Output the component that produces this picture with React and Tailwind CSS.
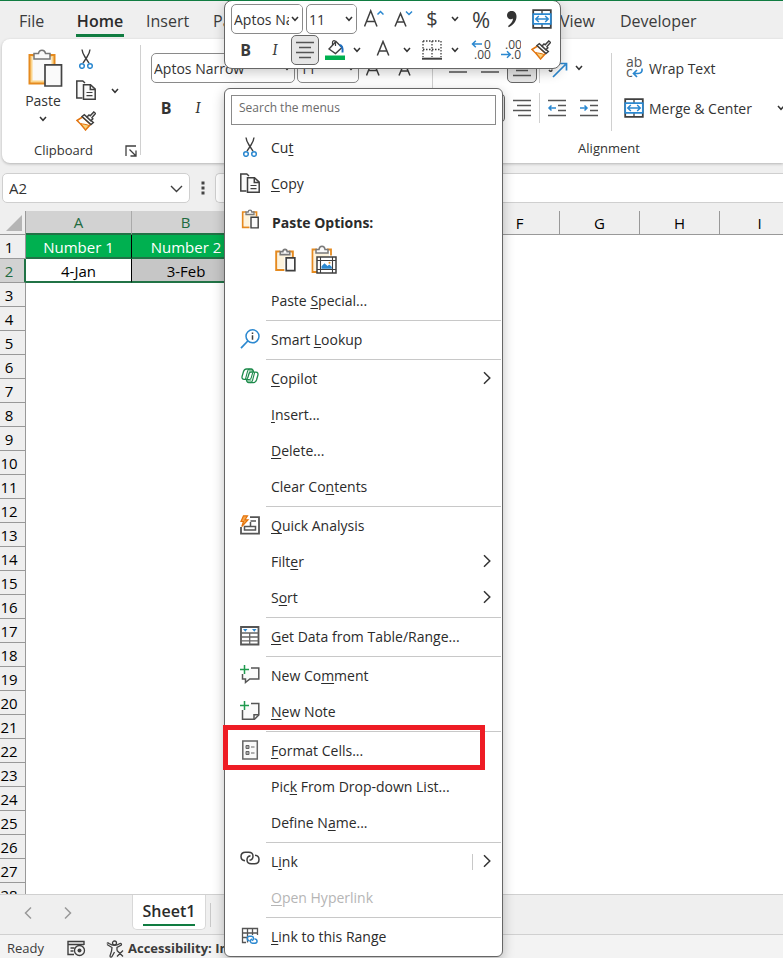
import React from "react";

const INK = "#3f3f3f";
const BLUE = "#2b88d0";

function Svg({ w = 20, h = w, box, className = "", children }) {
  return (
    <svg width={w} height={h} viewBox={box || `0 0 ${w} ${h}`} fill="none" stroke={INK} strokeWidth="1.5" className={`shrink-0 ${className}`} aria-hidden="true">
      {children}
    </svg>
  );
}

const Chevron = () => (
  <Svg w={8} h={6}><path d="M1 1l3 3.3L7 1" stroke="#333" strokeWidth="1.5" /></Svg>
);
const ArrowRight = () => (
  <Svg w={8} h={14}><path d="M1 1.2L6.8 7 1 12.8" stroke="#333" /></Svg>
);

const Scissors = () => (
  <Svg>
    <path d="M6 .5c.3 3 1.300 5 3 7.500l4 6.200M14 .5c-.3 3-1.300 5-3 7.500l-4 6.200" strokeWidth="1.400" />
    <circle cx="6" cy="17" r="2.300" stroke={BLUE} />
    <circle cx="14" cy="17" r="2.300" stroke={BLUE} />
  </Svg>
);
const Copy = () => (
  <Svg>
    <path d="M6.500 18H.8V1h6l2.200 2" fill="#fafafa" />
    <path d="M7.500 4.800h7l4.700 4.400v10H7.500z" fill="#fafafa" />
    <path d="M14.300 5v4.500h4.700" />
    <path d="M10.500 12.500h6M10.500 15.700h6" strokeWidth="1.200" />
  </Svg>
);
const Brush = () => (
  <Svg>
    <path d="M1 9.500l5.500-3.500 8 7.500-5 5.500C7.500 16.500 4 12 1 9.500z" fill="#fff" stroke="#e3740e" />
    <path d="M4.500 12.500c3 .8 6 .8 8.500 2l-3.500 4c-1.500-2-3-4-5-6z" fill="#f9d27c" stroke="#e3740e" strokeWidth="1" />
    <path d="M6 5.500l2.300-1.800 9 7.800-2.300 2z" fill="#fff" />
    <path d="M11 6l2-2 1.200.8 3.600-3.800 1.700 1.500-3.500 4 .8 1.300-2 2z" fill="#fff" />
  </Svg>
);
const Clip = ({ w = 20, h = 20 }) => (
  <Svg w={w} h={h} box="0 0 20 20">
    <path d="M6 3H2.700v15.300H9.500M13 3h3.500v4.500" stroke="#e58a1f" strokeWidth="1.700" />
    <path d="M4 4.500v12.500h5.500V7.500h5.700v-3z" fill="#fdf3dc" stroke="none" />
    <path d="M6 5.500V3h2.200c.2-2.500 3.400-2.500 3.600 0H14v2.500z" fill="#fafafa" stroke="#7a7a7a" strokeWidth="1.300" />
    <path d="M11 8.200h7.200v10.700H11z" fill="#fafafa" strokeWidth="1.400" />
  </Svg>
);
const BigPaste = () => (
  <Svg w={35} h={38}>
    <path d="M1.500 6h25v28.500h-25z" fill="#fbd58c" stroke="#e58a1f" strokeWidth="2" />
    <path d="M4.500 8h19v23.500h-19z" fill="#fafafa" stroke="none" />
    <path d="M6 10V4.500h4.500c.6-4.500 6.400-4.500 7 0H22V10z" fill="#fafafa" stroke="#777" />
    <path d="M17 15.800h16.500V37H17z" fill="#fafafa" stroke="#444" strokeWidth="1.700" />
  </Svg>
);
const PastePicture = () => (
  <Svg w={26} h={29}>
    <path d="M6 4.500H1.500v22.500H6M16 4.500h4v6" stroke="#e58a1f" strokeWidth="1.800" />
    <path d="M3 6v19.500h3V12h12V6z" fill="#fdf3dc" stroke="none" />
    <path d="M5 8V4.500h3c.4-4.500 5.600-4.500 6 0h3V8z" fill="#fafafa" stroke="#7a7a7a" />
    <path d="M6 12h19v16H6z" fill="#fff" />
    <path d="M9.500 12v16M21.500 12v16M6 15.500h19M6 24.500h19" strokeWidth="1.100" />
    <path d="M10.500 23.800v-2.500l3-3 3 2.700 1.800-1.500 2.500 2.500v1.800z" fill="#2b88d0" stroke="none" />
    <circle cx="18.500" cy="17.800" r="1" fill="#e58a1f" stroke="none" />
  </Svg>
);
const Lookup = () => (
  <Svg>
    <circle cx="12.500" cy="7.300" r="6.500" stroke={BLUE} />
    <path d="M7.800 12L1 19.200" stroke={BLUE} strokeWidth="1.700" />
    <path d="M12.500 6.300v4.500M12.500 3.500v1.500" />
  </Svg>
);
const Copilot = () => (
  <Svg w={18} h={16}>
    <path d="M8 1h2.500c1.200 0 1.600.8 2 3H9.500c-1 0-1.700.6-2 1.700zM10 15H7.500c-1.200 0-1.600-.8-2-3h3c1 0 1.700-.6 2-1.700z" fill="#8cc8a3" stroke="none" />
    <g stroke="#1d8a4b" strokeWidth="1.300">
      <path d="M12.600 4.200c-.4-2-.7-3.200-2.300-3.200H5.500C3.800 1 3 2 2.500 3.500L1.200 8c-.6 2 .1 3.300 1.900 3.300h1.700c1.200 0 1.700-.7 2-1.700l1.200-3.900c.3-1 .9-1.500 2-1.500h4.900c1.800 0 2.500 1.300 1.900 3.300l-1.300 4.500c-.5 1.500-1.300 2.700-3 2.700H7.700c-1.600 0-2-1-2.400-3.200" />
      <path d="M8.500 1C7.300 1.200 6.900 2 6.500 3.300L4.500 11.200M9.500 14.800c1.200-.2 1.600-1 2-2.300l2.200-8.300M5.500 11.500h2.700c1 0 1.700-.5 2-1.600l1.600-5.600" strokeWidth="1.100" />
    </g>
  </Svg>
);
const QuickAnalysis = () => (
  <Svg>
    <path d="M10 2.200h9v16.500H1V12" stroke="#555" strokeWidth="1.800" />
    <path d="M4.500 11.500h11v3.500h-11zM10.500 7v4.500M10.500 6h5.500" stroke="#555" />
    <path d="M3.500.8L1 6.500h2.500L1.800 11.500 8 4.800H5L7.500.8z" fill="#f9a64a" stroke="#e3740e" strokeWidth="1.200" />
  </Svg>
);
const DataTable = () => (
  <Svg>
    <path d="M1 1h17.500v17.500H1z" fill="#fff" stroke="#555" strokeWidth="1.800" />
    <path d="M1 7h17.500M1 11h17.500M1 14.800h17.500M9.700 7v11.500" stroke="#666" strokeWidth="1.300" />
    <path d="M3 3h4.500L5.300 5.800zM12 3h4.500l-2.200 2.800z" fill="#2b88d0" stroke="none" />
  </Svg>
);
const Comment = () => (
  <Svg>
    <path d="M11 3h7.800v11h-9L5.500 17.500V14H2.500V9" fill="#fafafa" stroke="#555" />
    <path d="M4.500 0v9M0 4.500h9" stroke="#1f9a4e" />
  </Svg>
);
const Note = () => (
  <Svg>
    <path d="M11 2.500h7.800V14l-4.300 4.300h-12V9" fill="#fafafa" stroke="#555" />
    <path d="M14 18v-4.300h4.500" stroke="#555" />
    <path d="M4.500 0v9M0 4.500h9" stroke="#1f9a4e" />
  </Svg>
);
const FormatCells = () => (
  <Svg>
    <path d="M2.800 1h14.500v18H2.800z" fill="#fafafa" stroke="#666" />
    <path d="M6 5.500h3v3H6zM6 11.500h3v3H6z" fill="#aaa" stroke="#666" strokeWidth="1" />
    <path d="M11 7h3.500M11 13h3.500" stroke="#666" strokeWidth="1.200" />
  </Svg>
);
const LinkIcon = () => (
  <Svg w={20} h={14}>
    <path d="M5 9.700C2.500 9.400 1 7.800 1 5.500 1 3 2.800 1.200 5.500 1.200h3.200c2.500 0 4.300 1.700 4.300 4 0 2.200-1.300 3.700-3.500 4.100" />
    <path d="M15 4.300c2.500.3 4 1.900 4 4.200 0 2.500-1.800 4.300-4.500 4.300h-3.200C8.800 12.800 7 11.100 7 8.800c0-2.200 1.300-3.700 3.500-4.100" />
  </Svg>
);
const LinkRange = () => (
  <Svg>
    <path d="M6 16.500H2.500v-14h15V9M2.500 7h15M2.500 11.500H8M7.500 2.500v14M12.500 2.500V9" stroke="#555" strokeWidth="1.300" />
    <path d="M9.500 14.700c-3 0-3-4.400 0-4.400h2c2.500 0 2.500 3.700.5 4.300M14.500 13c3-.2 3.500 4 .5 4.300h-2.500c-2.500 0-3-3.300-.5-4.300" stroke={BLUE} />
  </Svg>
);
const Merge = () => (
  <Svg>
    <path d="M1.200 1.200h17.600v17.600H1.200z" fill="#fff" strokeWidth="1.800" />
    <path d="M10 1v4M10 15v4" strokeWidth="1.300" />
    <path d="M1.200 5.200h17.600v9.600H1.200z" fill="#fff" stroke={BLUE} strokeWidth="1.700" />
    <path d="M4 10h12M6.800 7L3.800 10l3 3M13.200 7l3 3-3 3" stroke={BLUE} />
  </Svg>
);
const Lines = ({ d }) => <Svg><path d={d} stroke="#555" /></Svg>;
const IndentIcon = ({ right }) => (
  <Svg>
    <path d="M1 2.500h18M11 7.500h8M11 12.500h8M1 17.500h18" stroke="#555" />
    <path d={right ? "M1 10h7M5.500 7.500L8 10l-2.500 2.500" : "M2 10h7M4.500 7.500L2 10l2.500 2.500"} stroke={BLUE} />
  </Svg>
);
const FillIcon = () => (
  <Svg>
    <path d="M4 9l7-7.500 6 6-6.500 6z" fill="#fff" strokeWidth="1.400" />
    <path d="M7.500 5V2.500c0-2.500 3-2.500 3 0V6" strokeWidth="1.200" />
    <path d="M14.500 5c3 .5 3.500 3 3 7.500" stroke="#1f6fc0" strokeWidth="2" />
    <path d="M0 15.500h20V20H0z" fill="#00b050" stroke="none" />
  </Svg>
);
const BorderIcon = () => (
  <Svg>
    <path d="M1 1h18v16M1 1v16M10 1v16M1 9.500h18" strokeDasharray="1.500 1.500" strokeWidth="1.300" />
    <path d="M0 18.700h20" strokeWidth="2" />
  </Svg>
);
const Decimal = ({ less }) => (
  <Svg w={20} h={22}>
    <g fill="#444" stroke="none" fontFamily="Open Sans, sans-serif" fontSize="12">
      <text x={less ? 4 : 13} y="10">{less ? ".00" : "0"}</text>
      <text x={less ? 10 : 3} y="20">{less ? ".0" : ".00"}</text>
    </g>
    <path d={less ? "M0 15.500h9M6 12.200l3.300 3.300L6 18.800" : "M11 5H1.500M4.800 1.700L1.500 5l3.300 3.300"} stroke={BLUE} />
  </Svg>
);
const LetterA = ({ up, down }) => (
  <Svg>
    {up && <path d="M.5 17.500L6.700 1.800 13 17.500M2.800 12.500h8" />}
    {down && <path d="M1 17.500L6.500 4.500l5.500 13M3 13h7" />}
    {!up && !down && <path d="M4.300 15.500L10 1.500l5.800 14M6.300 11h7.500" />}
    {up && <path d="M13.500 5.500L16.500 2.500l3 3" stroke={BLUE} />}
    {down && <path d="M12 2.500l3 3 3-3" stroke={BLUE} />}
  </Svg>
);
const WrapIcon = () => (
  <Svg w={18} h={22}>
    <g fill="#555" stroke="none" fontFamily="Open Sans, sans-serif" fontSize="14">
      <text x="0" y="10">ab</text>
      <text x="0" y="20">c</text>
    </g>
    <path d="M16 11.500c.5 3.500-1 5-4 5H8M11 13l-3.500 3.500L11 20" stroke={BLUE} strokeWidth="1.700" />
  </Svg>
);
const Orientation = () => (
  <Svg>
    <path d="M5 19L17.500 6.500M11.500 5.500h7v7" stroke={BLUE} strokeWidth="1.700" />
    <path d="M1 12c1.500 2 3 1.500 3-.5" />
  </Svg>
);

function IconButton({ label, className, children }) {
  return (
    <button type="button" aria-label={label} className={`flex shrink-0 items-center justify-center ${className}`}>
      {children}
    </button>
  );
}

function Picker({ label, value, className }) {
  return (
    <div className={`relative shrink-0 ${className}`}>
      <select aria-label={label} className="h-full w-full appearance-none overflow-hidden rounded-[5px] border border-[#8a8a8a] bg-white pr-3 pl-[2px] text-[14px] text-[#333] outline-none">
        <option>{value}</option>
      </select>
      <span className="pointer-events-none absolute top-px right-px flex h-[27px] items-center rounded-r bg-white pr-[3px] pl-0.5"><Chevron /></span>
    </div>
  );
}

function Tabs() {
  return (
    <nav className="flex h-[38px] shrink-0 items-start pt-[7px] pl-[19px] text-[16px] leading-[26px] text-[#3b3b3b]">
      <button type="button" className="w-[57px] shrink-0 text-left">File</button>
      <button type="button" className="w-[48px] shrink-0 border-b-[3px] border-[#107c41] text-center font-semibold text-[#2b2b2b]">Home</button>
      <button type="button" className="ml-[22px] w-[67px] shrink-0 text-left">Insert</button>
      <button type="button" className="w-[347px] shrink-0 text-left">Page Layout</button>
      <button type="button" className="w-[60px] shrink-0 text-left">View</button>
      <button type="button" className="shrink-0">Developer</button>
    </nav>
  );
}

function Ribbon() {
  return (
    <section className="ml-0.5 flex h-[124px] shrink-0 overflow-hidden rounded-l-lg bg-white text-[14px] text-[#333] shadow-[0_1px_3px_rgba(0,0,0,0.25)]">
      <div className="flex w-[138px] shrink-0 flex-col pt-[10px]">
        <div className="flex h-[92px]">
          <button type="button" className="ml-[20px] flex w-[42px] flex-col items-center">
            <span className="pl-1"><BigPaste /></span>
            <span className="mt-[3px] leading-[22px]">Paste</span>
            <span className="mt-[4px]"><Chevron /></span>
          </button>
          <div className="ml-[12px] flex flex-col gap-[11px]">
            <IconButton label="Cut" className="h-5 w-5"><Scissors /></IconButton>
            <IconButton label="Copy" className="h-5 w-5"><Copy /></IconButton>
            <IconButton label="Format Painter" className="h-5 w-5"><Brush /></IconButton>
          </div>
          <IconButton label="Copy options" className="ml-[15px] h-[84px] w-2"><Chevron /></IconButton>
        </div>
        <div className="flex h-5 items-center text-[13px]">
          <span className="w-[123px] text-center">Clipboard</span>
          <button type="button" aria-label="Clipboard settings">
            <Svg w={12}><path d="M1 11V1h10M4.500 4.500l6 6M11 5.500V11H5.500" strokeWidth="1.300" /></Svg>
          </button>
        </div>
      </div>
      <div className="mt-[6px] h-[110px] w-px shrink-0 bg-[#d0d0d0]" />
      <div className="flex w-[291px] shrink-0 flex-col gap-[10px] pt-[14px] pl-[10px]">
        <div className="flex h-[30px] items-center">
          <Picker label="Font" value="Aptos Narrow" className="h-[30px] w-[144px]" />
          <Picker label="Font size" value="11" className="ml-0.5 h-[30px] w-[62px]" />
          <IconButton label="Increase font size" className="ml-[7px] w-5"><LetterA up /></IconButton>
          <IconButton label="Decrease font size" className="ml-3 w-5"><LetterA down /></IconButton>
        </div>
        <div className="flex h-[29px] items-center text-[16px]">
          <button type="button" className="w-[30px] font-bold">B</button>
          <button type="button" className="w-[34px] font-serif italic">I</button>
        </div>
      </div>
      <div className="mt-[6px] h-[110px] w-px shrink-0 bg-[#d0d0d0]" />
      <div className="flex w-[352px] shrink-0 flex-col">
        <div className="flex h-[97px] pt-[14px]">
          <div className="flex w-[178px] flex-col gap-[10px] pl-[10px]">
            <div className="flex h-[30px] items-center gap-0.5">
              <IconButton label="Top align" className="h-[30px] w-[30px]"><Lines d="M1 5h18M4 10h12M1 14h18" /></IconButton>
              <IconButton label="Middle align" className="h-[30px] w-[30px]"><Lines d="M1 4h18M4 9h12M1 14h18" /></IconButton>
              <IconButton label="Bottom align" className="h-[30px] w-[30px] rounded-[5px] border border-[#666] bg-[#e6e6e6]"><Lines d="M1 8h18M4 12.500h12M1 17.500h18" /></IconButton>
              <span className="h-[30px] w-px bg-[#d0d0d0]" />
              <IconButton label="Orientation" className="ml-1 w-6"><Orientation /></IconButton>
              <IconButton label="Orientation options" className="ml-[3px] w-2"><Chevron /></IconButton>
            </div>
            <div className="flex h-[30px] items-center gap-0.5">
              <IconButton label="Align left" className="h-[30px] w-[30px]"><Lines d="M1 2.500h18M1 7.500h12M1 12.500h18M1 17.500h12" /></IconButton>
              <IconButton label="Center" className="h-[30px] w-[30px] rounded-[5px] border border-[#666] bg-[#e6e6e6]"><Lines d="M1 2.500h18M4 7.500h12M1 12.500h18M4 17.500h12" /></IconButton>
              <IconButton label="Align right" className="h-[30px] w-[30px]"><Lines d="M1 2.500h18M5 7.500h14M1 12.500h18M6 17.500h13" /></IconButton>
              <span className="h-[30px] w-px bg-[#d0d0d0]" />
              <IconButton label="Decrease indent" className="w-[30px]"><IndentIcon /></IconButton>
              <IconButton label="Increase indent" className="w-[30px]"><IndentIcon right /></IconButton>
            </div>
          </div>
          <div className="h-[78px] w-px bg-[#d0d0d0]" />
          <div className="flex flex-col gap-[10px] pl-[12px]">
            <button type="button" className="flex h-[30px] items-center gap-[5px] pl-[2px]"><WrapIcon /><span>Wrap Text</span></button>
            <div className="flex h-[30px] items-center">
              <button type="button" className="flex w-[153px] items-center gap-[5px] whitespace-nowrap"><Merge /><span>Merge &amp; Center</span></button>
              <IconButton label="Merge options" className="w-2"><Chevron /></IconButton>
            </div>
          </div>
        </div>
        <div className="flex h-[30px] items-center justify-center text-[13px]">Alignment</div>
      </div>
    </section>
  );
}

function FormulaBar() {
  return (
    <div className="mt-[10px] flex h-[30px] shrink-0 pl-0.5">
      <div className="relative w-[188px] shrink-0">
        <input aria-label="Name box" defaultValue="A2" className="h-full w-full rounded-[5px] border border-[#cfcfcf] bg-white pl-[6px] text-[15px] text-[#333] outline-none" />
        <Svg w={13} h={8} className="absolute top-[12px] right-[7px]"><path d="M1 1l5.500 5.500L12 1" strokeWidth="1.400" /></Svg>
      </div>
      <Svg w={4} h={14} className="mt-2 ml-[11px]"><path d="M.5 .5h3v3h-3zM.5 5.500h3v3h-3zM.5 10.500h3v3h-3z" fill="#444" stroke="none" /></Svg>
      <input aria-label="Formula bar" className="ml-[10px] min-w-0 flex-1 rounded-l-[5px] border border-r-0 border-[#cfcfcf] bg-white outline-none" />
    </div>
  );
}

const COLUMNS = ["A", "B", "C", "D", "E", "F", "G", "H", "I"];
const ROWS = Array.from({ length: 28 }, (_, i) => i + 1);

function Sheet() {
  return (
    <div className="mt-2 min-h-0 flex-1 overflow-hidden bg-white text-black">
      <table className="w-[800px] table-fixed border-separate border-spacing-0 text-center text-[15px] leading-[20px]">
        <colgroup>
          <col className="w-[26px]" />
          <col className="w-[106px]" />
          <col className="w-[108px]" />
        </colgroup>
        <thead>
          <tr className="h-6">
            <th className="border-r border-b border-[#999] bg-[#efefef] p-0">
              <Svg w={16} className="ml-[6px]"><path d="M16 0v16H0z" fill="#b5b5b5" stroke="none" /></Svg>
            </th>
            {COLUMNS.map((c, i) => (
              <th key={c} className={i < 5 ? "border-r border-b-2 border-r-[#aaa] border-b-[#217346] bg-[#d2d2d2] p-0 font-normal text-[#1e6b41]" : "border-r border-b border-[#999] bg-[#efefef] p-0 font-normal"}>{c}</th>
            ))}
          </tr>
        </thead>
        <tbody>
          {ROWS.map((n) => (
            <tr key={n} className="h-6">
              <th className={n === 2 ? "border-r-2 border-b border-r-[#217346] border-b-[#999] bg-[#d2d2d2] p-0 pr-[6px] font-normal text-[#1e6b41]" : "border-r border-b border-[#999] bg-[#efefef] p-0 pr-[7px] font-normal"}>{n}</th>
              {n === 1 && (
                <>
                  <td className="border-r border-b-2 border-r-black border-b-[#217346] bg-[#00b050] p-0 pt-px text-white">Number 1</td>
                  <td className="border-b-2 border-[#217346] bg-[#00b050] p-0 pt-px text-white">Number 2</td>
                </>
              )}
              {n === 2 && (
                <>
                  <td className="border-r border-b-2 border-r-black border-b-[#217346] p-0 pt-px">4-Jan</td>
                  <td className="border-b-2 border-[#217346] bg-[#c6c6c6] p-0 pt-px">3-Feb</td>
                </>
              )}
              {n > 2 && <td colSpan={9} className="p-0" />}
            </tr>
          ))}
        </tbody>
      </table>
    </div>
  );
}

function SheetTabs() {
  return (
    <div className="flex h-[41px] shrink-0 items-start border-t border-b border-[#d0d0d0] bg-[#efefef]">
      <IconButton label="Previous sheet" className="ml-[18px] h-9 w-5"><Svg w={8} h={14}><path d="M7 1.500L1.500 7 7 12.500" stroke="#999" /></Svg></IconButton>
      <IconButton label="Next sheet" className="ml-[20px] h-9 w-5"><Svg w={8} h={14}><path d="M1 1.500L6.500 7 1 12.500" stroke="#999" /></Svg></IconButton>
      <div className="ml-[54px] flex h-[35px] w-[74px] justify-center rounded-b-[5px] border border-t-0 border-[#d8d8d8] bg-white">
        <button type="button" className="mt-[4px] h-[27px] border-b-2 border-[#107c41] text-[16px] leading-[25px] font-semibold text-[#2b2b2b]">Sheet1</button>
      </div>
      <div className="mt-2 ml-1 h-6 w-px bg-[#c8c8c8]" />
    </div>
  );
}

function StatusBar() {
  return (
    <footer className="flex h-[23px] shrink-0 items-center bg-[#f3f3f3] pt-1 pl-[7px] text-[13px] text-[#3b3b3b]">
      <span className="w-[60px]">Ready</span>
      <Svg w={19} h={17}>
        <path d="M7 14.500H1V1.500h16V5M1 4.500h16M3.500 8h4M3.500 11h3" strokeWidth="1.400" />
        <circle cx="12.500" cy="10.500" r="5" strokeWidth="1.300" />
        <circle cx="12.500" cy="10.500" r="2" fill={INK} stroke="none" />
      </Svg>
      <Svg w={20} h={18} className="ml-[20px]">
        <circle cx="8.500" cy="3" r="2" strokeWidth="1.300" />
        <path d="M1 3.500c.5-1 1.500-.5 2 0 3.500 2.300 7.500 2.300 11 0 1-.6 2 .8 1 1.700L11 7.500v3M1 4.500l5 3c0 3-1 6-2 8.500 0 1.500 1.500 1.500 2 .5l2.500-4.500M11 10.500l6 6M17 10.500l-6 6" strokeWidth="1.300" />
      </Svg>
      <span className="ml-[2px] font-bold whitespace-nowrap">Accessibility: Investigate</span>
    </footer>
  );
}

function MiniToolbar() {
  return (
    <div className="absolute -top-px left-[224px] flex h-[69px] w-[337px] flex-col gap-px rounded-lg border border-[#666] bg-white pt-[3px] pl-[6px] text-[#3b3b3b] shadow-[0_4px_12px_rgba(0,0,0,0.2)]">
      <div className="flex h-[30px] items-center">
        <Picker label="Font" value="Aptos Narrow" className="h-[30px] w-[72px]" />
        <Picker label="Font size" value="11" className="ml-[3px] h-[30px] w-[51px]" />
        <IconButton label="Increase font size" className="ml-0.5 w-[30px]"><LetterA up /></IconButton>
        <IconButton label="Decrease font size" className="w-[30px]"><LetterA down /></IconButton>
        <button type="button" className="w-[26px] text-[20px] leading-[28px]">$</button>
        <IconButton label="Currency options" className="w-5"><Chevron /></IconButton>
        <button type="button" className="w-8 text-[22px] leading-[28px]">%</button>
        <IconButton label="Comma style" className="w-[30px]"><Svg w={12} h={18}><path d="M5.500 1C2.800 1 1 2.800 1 5.200s1.700 4 4 4c.8 0 1.500-.2 2-.6-.2 3-2 5.400-5 7.400l.8 1.200C7.500 15 10.500 11 10.500 6.500 10.500 3 8.500 1 5.500 1z" fill="#333" stroke="none" /></Svg></IconButton>
        <IconButton label="Merge and center" className="w-[30px]"><Merge /></IconButton>
      </div>
      <div className="flex h-[30px] items-center text-[16px]">
        <button type="button" className="w-[29px] font-bold">B</button>
        <button type="button" className="w-[30px] font-serif italic">I</button>
        <IconButton label="Center" className="mx-px h-[30px] w-7 rounded-[5px] border border-[#666] bg-[#e6e6e6]"><Lines d="M1 2.500h18M4 7.500h12M1 12.500h18M4 17.500h12" /></IconButton>
        <IconButton label="Fill color" className="w-[29px]"><FillIcon /></IconButton>
        <IconButton label="Fill options" className="w-4"><Chevron /></IconButton>
        <IconButton label="Font color" className="ml-0.5 w-8"><LetterA /></IconButton>
        <IconButton label="Font color options" className="w-4"><Chevron /></IconButton>
        <IconButton label="Borders" className="ml-0.5 w-[30px]"><BorderIcon /></IconButton>
        <IconButton label="Border options" className="w-4"><Chevron /></IconButton>
        <IconButton label="Increase decimal" className="ml-[3px] w-[30px]"><Decimal /></IconButton>
        <IconButton label="Decrease decimal" className="w-[30px]"><Decimal less /></IconButton>
        <IconButton label="Format painter" className="w-[30px]"><Brush /></IconButton>
      </div>
    </div>
  );
}

// An underscore marks the access key that follows it.
const MENU_TOP = [
  { label: "Cu_t", icon: <Scissors /> },
  { label: "_Copy", icon: <Copy /> },
];
const MENU_REST = [
  [{ label: "Paste _Special..." }],
  [{ label: "Smart _Lookup", icon: <Lookup /> }],
  [{ label: "_Copilot", icon: <Copilot />, more: true }, { label: "_Insert..." }, { label: "_Delete..." }, { label: "Clear Co_ntents" }],
  [{ label: "_Quick Analysis", icon: <QuickAnalysis /> }, { label: "Filt_er", more: true }, { label: "S_ort", more: true }],
  [{ label: "_Get Data from Table/Range...", icon: <DataTable /> }],
  [{ label: "New Co_mment", icon: <Comment /> }, { label: "_New Note", icon: <Note /> }],
  [{ label: "_Format Cells...", icon: <FormatCells />, marked: true }, { label: "Pic_k From Drop-down List..." }, { label: "Define N_ame..." }],
  [{ label: "L_ink", icon: <LinkIcon />, more: true, split: true }, { label: "_Open Hyperlink", disabled: true }],
  [{ label: "_Link to this Range", icon: <LinkRange /> }],
];

function MenuItem({ label, icon, more, split, disabled, marked }) {
  const [before, after] = label.split("_");
  return (
    <li className="relative">
      <button type="button" disabled={disabled} className="flex h-9 w-full items-center pr-[11px] pl-[15px] text-left disabled:text-[#b5b5b5]">
        <span className="flex h-[22px] w-5 items-start justify-center">{icon}</span>
        <span className="ml-[11px] flex-1">
          {before}<u className="underline-offset-2">{after[0]}</u>{after.slice(1)}
        </span>
        {split && <span className="mr-[10px] h-4 w-px bg-[#c8c8c8]" />}
        {more && <span className="h-4"><ArrowRight /></span>}
      </button>
      {marked && <span className="pointer-events-none absolute -top-[8px] -left-0.5 z-10 h-[45px] w-[262px] border-5 border-[#ee1c24]" />}
    </li>
  );
}

function ContextMenu() {
  return (
    <div className="absolute top-[87px] left-[224px] w-[279px] rounded-md border border-[#666] bg-white pb-px text-[14px] leading-[20px] text-[#2b2b2b] shadow-[0_4px_12px_rgba(0,0,0,0.25)]">
      <input aria-label="Search the menus" placeholder="Search the menus" className="mt-[6px] ml-[6px] block h-[30px] w-[265px] border border-[#8a8a8a] bg-white pb-1.5 pl-[7px] text-[12px] outline-none placeholder:text-[#6b6b6b]" />
      <ul className="mt-[5px]">
        {MENU_TOP.map((item) => <MenuItem key={item.label} {...item} />)}
      </ul>
      <div className="mt-[3px] flex h-9 items-center pl-[15px]">
        <span className="flex h-7 w-5 items-start justify-center"><Clip /></span>
        <span className="ml-3 font-bold">Paste Options:</span>
      </div>
      <div className="flex h-[42px] items-start gap-[14px] pt-[4px] pl-[48px]">
        <IconButton label="Paste" className="h-[30px] w-6"><Clip w={24} h={24} /></IconButton>
        <IconButton label="Paste as picture" className="w-[26px]"><PastePicture /></IconButton>
      </div>
      {MENU_REST.map((group, i) => (
        <ul key={group[0].label} className={i === 0 ? "" : "before:my-px before:mr-px before:ml-[41px] before:block before:h-px before:bg-[#c8c8c8]"}>
          {group.map((item) => <MenuItem key={item.label} {...item} />)}
        </ul>
      ))}
    </div>
  );
}

export default function App() {
  return (
    <div className="relative flex h-screen min-h-[480px] flex-col overflow-hidden border-t border-[#107c41] bg-[#efefef] font-['Open_Sans','Noto_Sans',sans-serif]">
      <Tabs />
      <Ribbon />
      <FormulaBar />
      <Sheet />
      <SheetTabs />
      <StatusBar />
      <MiniToolbar />
      <ContextMenu />
    </div>
  );
}
